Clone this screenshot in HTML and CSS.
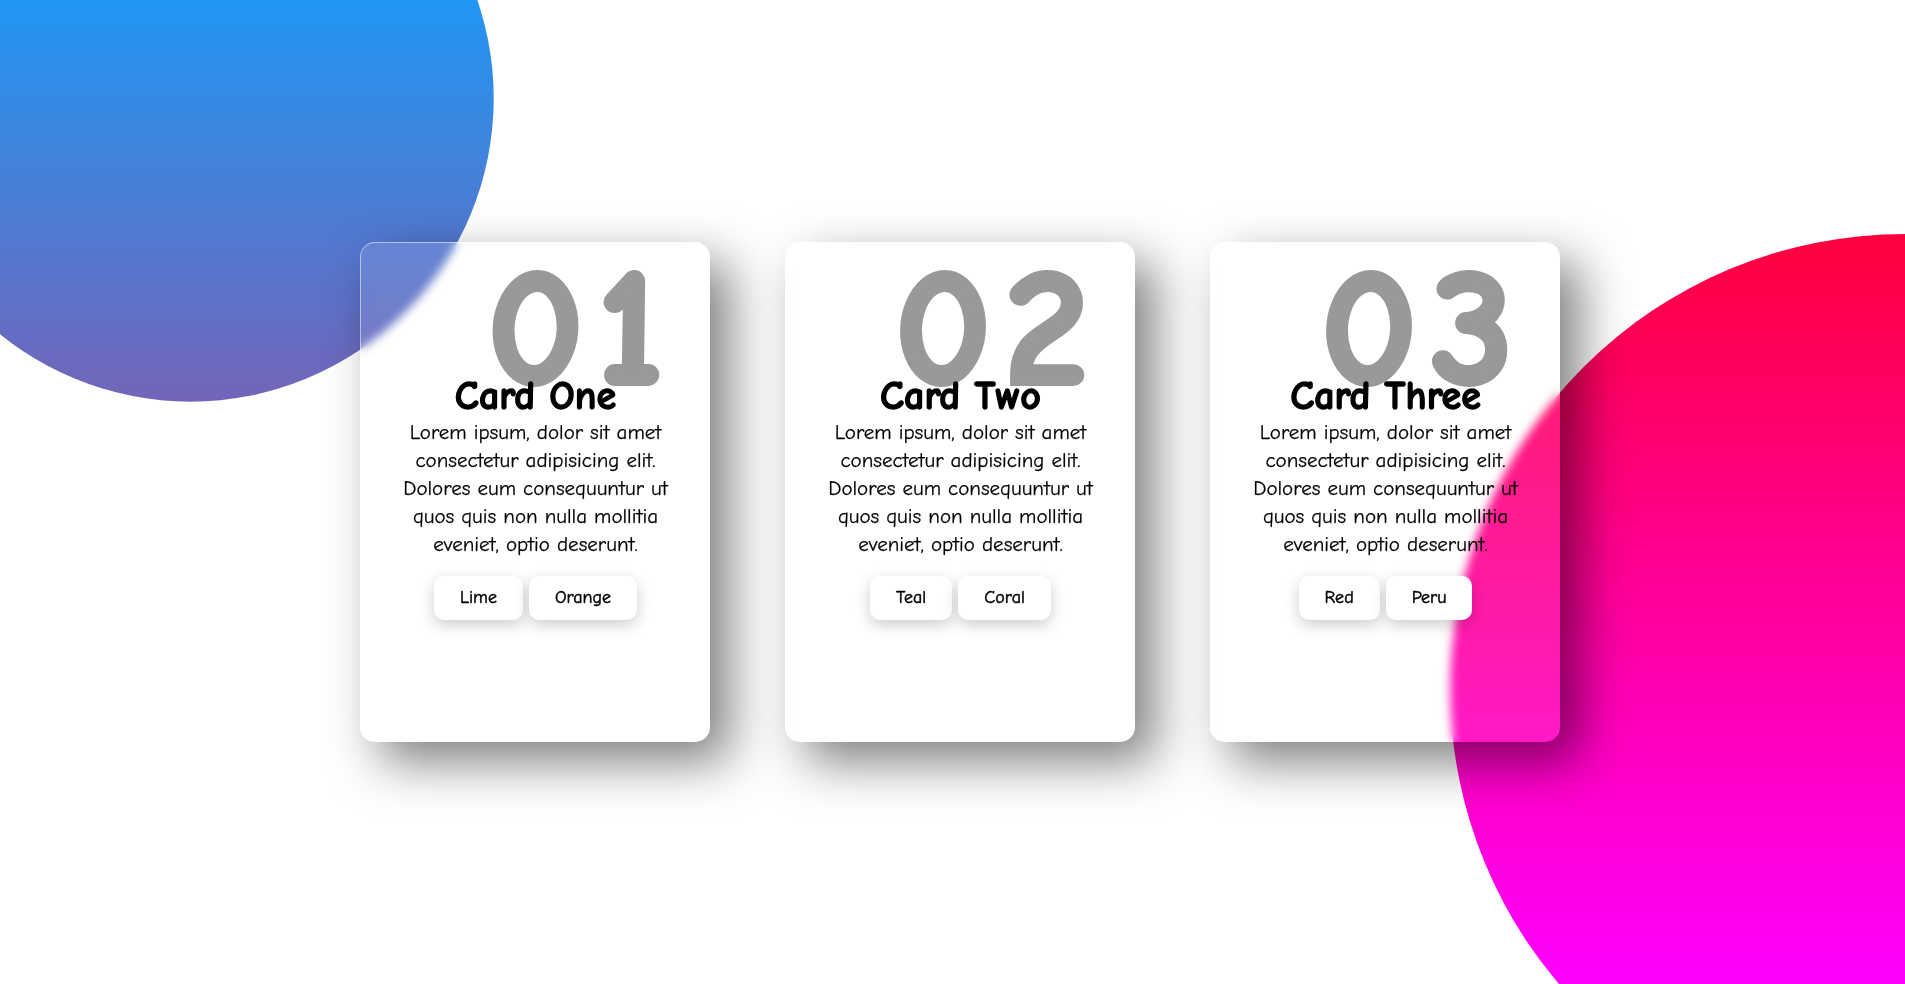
FILE: index.html
```html
<!DOCTYPE html>
<html lang="en">
<head>
<meta charset="UTF-8">
<title>Glass Cards</title>
<link rel="stylesheet" href="styles.css">
</head>
<body>
  <main class="container">
    <div class="card">
      <h2 class="num">01</h2>
      <div class="content">
        <h3 class="title">Card One</h3>
        <p class="text">Lorem ipsum, dolor sit amet consectetur adipisicing elit. Dolores eum consequuntur ut quos quis non nulla mollitia eveniet, optio deserunt.</p>
        <div class="tags"><span class="tag">Lime</span><span class="tag">Orange</span></div>
      </div>
    </div>
    <div class="card">
      <h2 class="num">02</h2>
      <div class="content">
        <h3 class="title">Card Two</h3>
        <p class="text">Lorem ipsum, dolor sit amet consectetur adipisicing elit. Dolores eum consequuntur ut quos quis non nulla mollitia eveniet, optio deserunt.</p>
        <div class="tags"><span class="tag">Teal</span><span class="tag">Coral</span></div>
      </div>
    </div>
    <div class="card">
      <h2 class="num">03</h2>
      <div class="content">
        <h3 class="title">Card Three</h3>
        <p class="text">Lorem ipsum, dolor sit amet consectetur adipisicing elit. Dolores eum consequuntur ut quos quis non nulla mollitia eveniet, optio deserunt.</p>
        <div class="tags"><span class="tag">Red</span><span class="tag">Peru</span></div>
      </div>
    </div>
  </main>
</body>
</html>
```

FILE: styles.css
```css
* {
  margin: 0;
  padding: 0;
  box-sizing: border-box;
}

html, body {
  height: 100%;
}

body {
  font-family: "Comic Sans MS", "Comic Neue", cursive;
  background: #fff;
  min-height: 100vh;
  display: flex;
  justify-content: center;
  align-items: center;
  overflow: hidden;
  position: relative;
}

body::before {
  content: "";
  position: absolute;
  inset: 0;
  background: linear-gradient(#ff0000, #ff00ff);
  clip-path: circle(30% at right 70%);
}

body::after {
  content: "";
  position: absolute;
  inset: 0;
  background: linear-gradient(#2196f3, #e91e63);
  clip-path: circle(20% at 10% 10%);
}

.container {
  position: relative;
  z-index: 1;
  display: flex;
  gap: 75px;
  padding-left: 15px;
}

.card {
  position: relative;
  width: 350px;
  height: 500px;
  border-radius: 15px;
  background: rgba(255, 255, 255, 0.1);
  box-shadow: 20px 20px 50px rgba(0, 0, 0, 0.5);
  border-top: 1px solid rgba(255, 255, 255, 0.5);
  border-left: 1px solid rgba(255, 255, 255, 0.5);
  backdrop-filter: blur(5px);
  -webkit-backdrop-filter: blur(5px);
  overflow: hidden;
  display: flex;
  flex-direction: column;
  align-items: center;
  padding-top: 129px;
}

.num {
  position: absolute;
  top: 3px;
  right: 33px;
  font-size: 167px;
  font-weight: 700;
  line-height: 1;
  letter-spacing: 14px;
  color: #999;
  -webkit-text-stroke: 6px #999;
  pointer-events: none;
}

.content {
  position: relative;
  width: 290px;
  text-align: center;
}

.title {
  font-size: 40px;
  font-weight: 700;
  line-height: 48px;
  margin-bottom: -2px;
  color: #000;
  -webkit-text-stroke: 1.3px #000;
}

.text {
  font-size: 21px;
  line-height: 28px;
  color: #000;
  -webkit-text-stroke: 0.25px #000;
}

.tags {
  display: flex;
  justify-content: center;
  gap: 6px;
  margin-top: 18px;
}

.tag {
  display: inline-block;
  padding: 11px 26px;
  background: #fff;
  border-radius: 10px;
  font-size: 18px;
  line-height: 22px;
  font-weight: 400;
  color: #000;
  -webkit-text-stroke: 0.5px #000;
  box-shadow: 0 5px 15px rgba(0, 0, 0, 0.2);
}
```
